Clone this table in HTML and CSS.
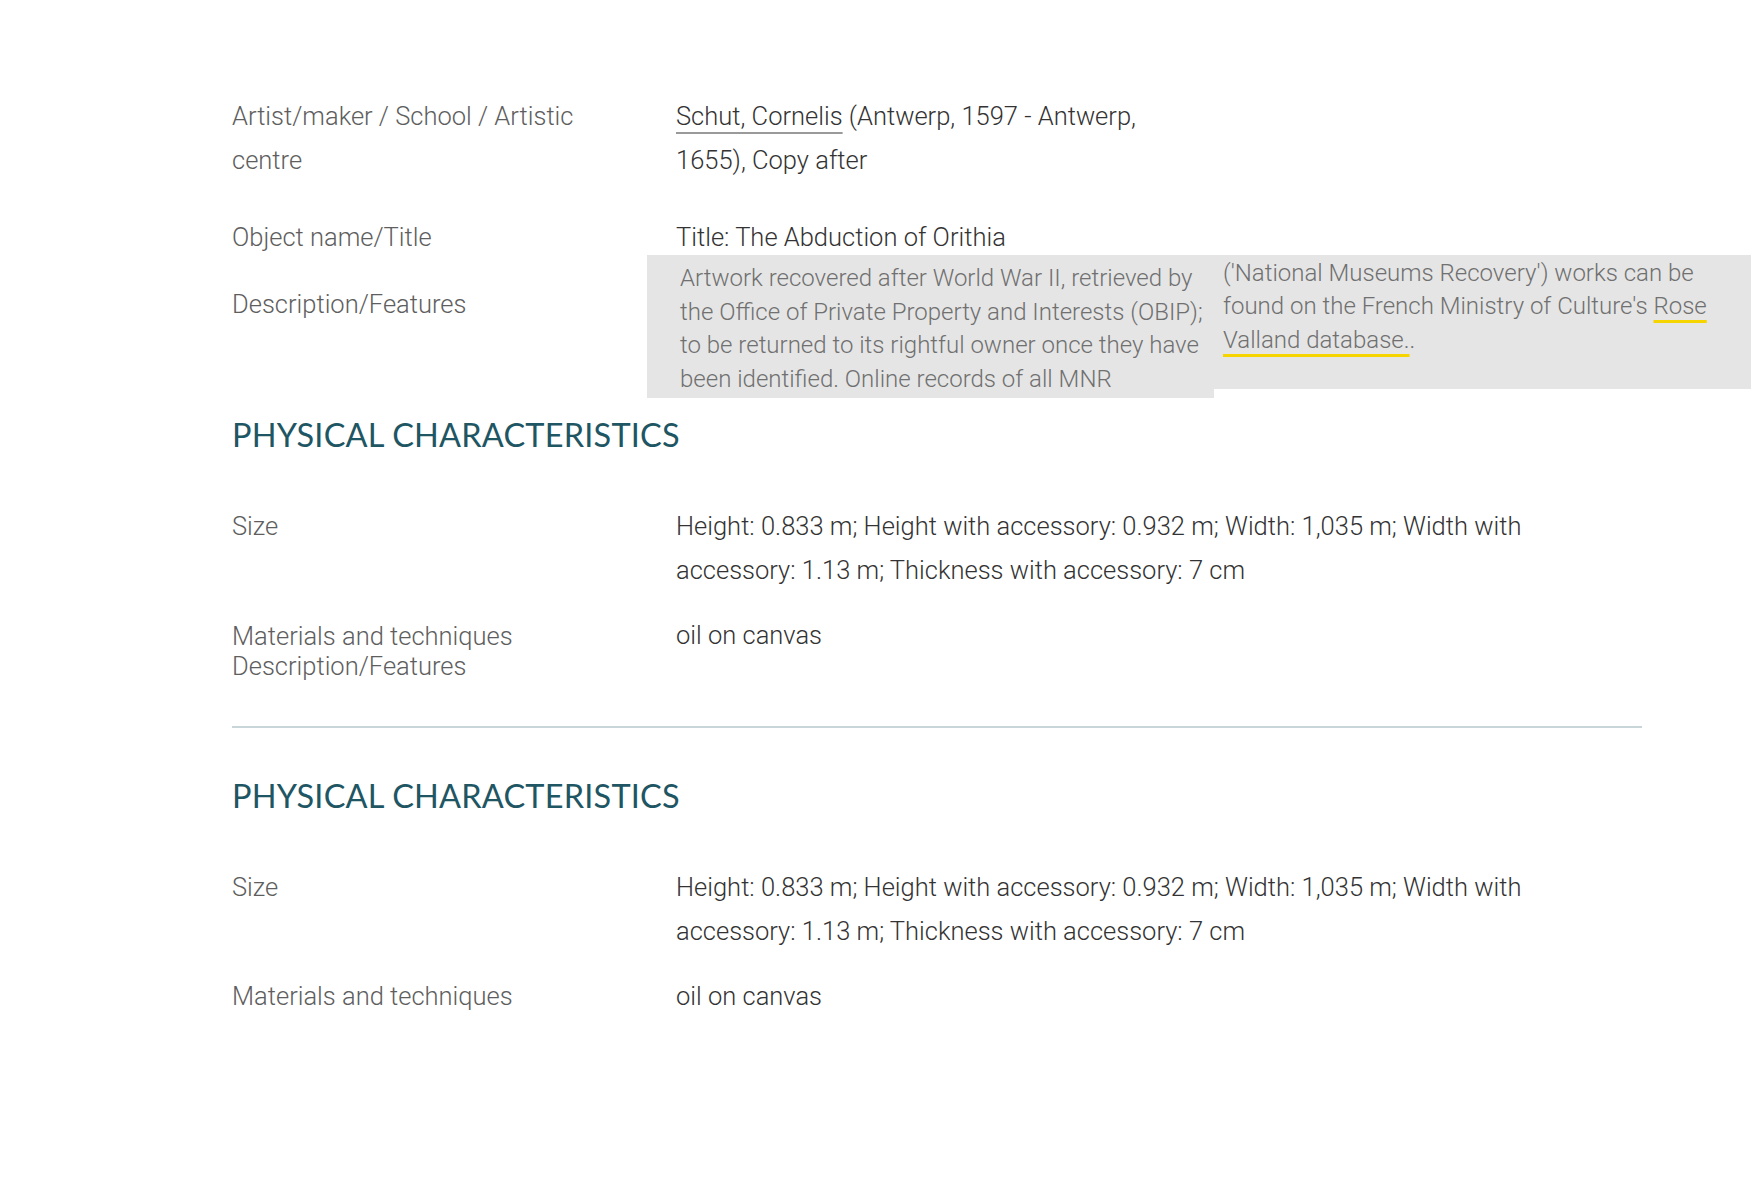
FILE: index.html
```html
<!DOCTYPE html>
<html lang="en">
<head>
<meta charset="utf-8">
<title>Record – The Abduction of Orithia</title>
<link rel="stylesheet" href="styles.css">
</head>
<body>
<main class="page">
  <div class="fields fields-top">
    <div class="row row-artist">
      <div class="label">Artist/maker / School / Artistic centre</div>
      <div class="value"><a class="artist-link" href="#">Schut, Cornelis</a> (Antwerp, 1597 - Antwerp, 1655), Copy after</div>
    </div>
    <div class="row row-title">
      <div class="label">Object name/Title</div>
      <div class="value">Title: The Abduction of Orithia</div>
    </div>
    <div class="row row-desc">
      <div class="label">Description/Features</div>
      <div class="desc">
        <p class="desc-part desc-first">Artwork recovered after World War II, retrieved by the Office of Private Property and Interests (OBIP); to be returned to its rightful owner once they have been identified. Online records of all MNR</p>
        <p class="desc-part desc-second">('National Museums Recovery') works can be found on the French Ministry of Culture's <a class="db-link" href="#">Rose Valland database.</a>.</p>
      </div>
    </div>
  </div>

  <section class="section section-first">
    <h2 class="section-title">PHYSICAL CHARACTERISTICS</h2>
    <div class="fields">
      <div class="row row-size">
        <div class="label">Size</div>
        <div class="value">Height: 0.833 m; Height with accessory: 0.932 m; Width: 1,035 m; Width with accessory: 1.13 m; Thickness with accessory: 7 cm</div>
      </div>
      <div class="row row-materials">
        <div class="label label-stack">Materials and techniques<br>Description/Features</div>
        <div class="value">oil on canvas</div>
      </div>
    </div>
  </section>

  <hr class="divider">

  <section class="section section-second">
    <h2 class="section-title">PHYSICAL CHARACTERISTICS</h2>
    <div class="fields">
      <div class="row row-size">
        <div class="label">Size</div>
        <div class="value">Height: 0.833 m; Height with accessory: 0.932 m; Width: 1,035 m; Width with accessory: 1.13 m; Thickness with accessory: 7 cm</div>
      </div>
      <div class="row row-materials">
        <div class="label">Materials and techniques</div>
        <div class="value">oil on canvas</div>
      </div>
    </div>
  </section>
</main>
</body>
</html>
```

FILE: styles.css
```css
html, body {
  margin: 0;
  padding: 0;
  background: #ffffff;
  overflow: hidden;
}

body {
  font-family: Roboto, "Liberation Sans", Arial, sans-serif;
  font-weight: 300;
  color: #333333;
}

.page {
  width: 1410px;
  padding: 95px 0 0 232px;
}

.row {
  display: grid;
  grid-template-columns: 444px 900px;
  font-size: 25.5px;
  line-height: 43.5px;
}

.label {
  color: #5e5e5e;
}

.value {
  color: #333333;
}

/* top block */
.row-artist .label {
  max-width: 380px;
}

.row-artist .value {
  max-width: 490px;
}

.artist-link {
  color: inherit;
  text-decoration: underline;
  text-decoration-color: #9a9a9a;
  text-decoration-thickness: 2px;
  text-underline-offset: 7px;
}

.row-title {
  margin-top: 34px;
}

.row-desc {
  margin-top: -4.5px;
}

.row-desc .label {
  padding-top: 28px;
}

.desc {
  display: flex;
  align-items: flex-start;
  width: 1104px;
  margin-left: -29px;
}

.desc-part {
  margin: 0;
  box-sizing: border-box;
  background: #e5e5e5;
  color: #707070;
  font-size: 24px;
  line-height: 33.7px;
}

.desc-first {
  width: 567px;
  padding: 7px 6px 1px 33px;
}

.desc-second {
  width: 537px;
  padding: 1.5px 28px 31.5px 9px;
}

.db-link {
  color: inherit;
  text-decoration: underline;
  text-decoration-color: #f6d400;
  text-decoration-thickness: 3px;
  text-underline-offset: 6px;
}

/* sections */
.section-title {
  margin: 0;
  font-family: Lato, "Open Sans", sans-serif;
  font-weight: 400;
  font-size: 32.5px;
  line-height: 40px;
  letter-spacing: 0.2px;
  color: #1f5663;
}

.section-first {
  margin-top: 17.5px;
}

.section .fields {
  margin-top: 50px;
}

.row-materials {
  margin-top: 22px;
}

.label-stack {
  line-height: 30px;
  padding-top: 6.75px;
}

.divider {
  width: 1410px;
  height: 2px;
  margin: 45px 0 0 0;
  border: 0;
  background: #c9d6d9;
}

.section-second {
  margin-top: 48px;
}
```
